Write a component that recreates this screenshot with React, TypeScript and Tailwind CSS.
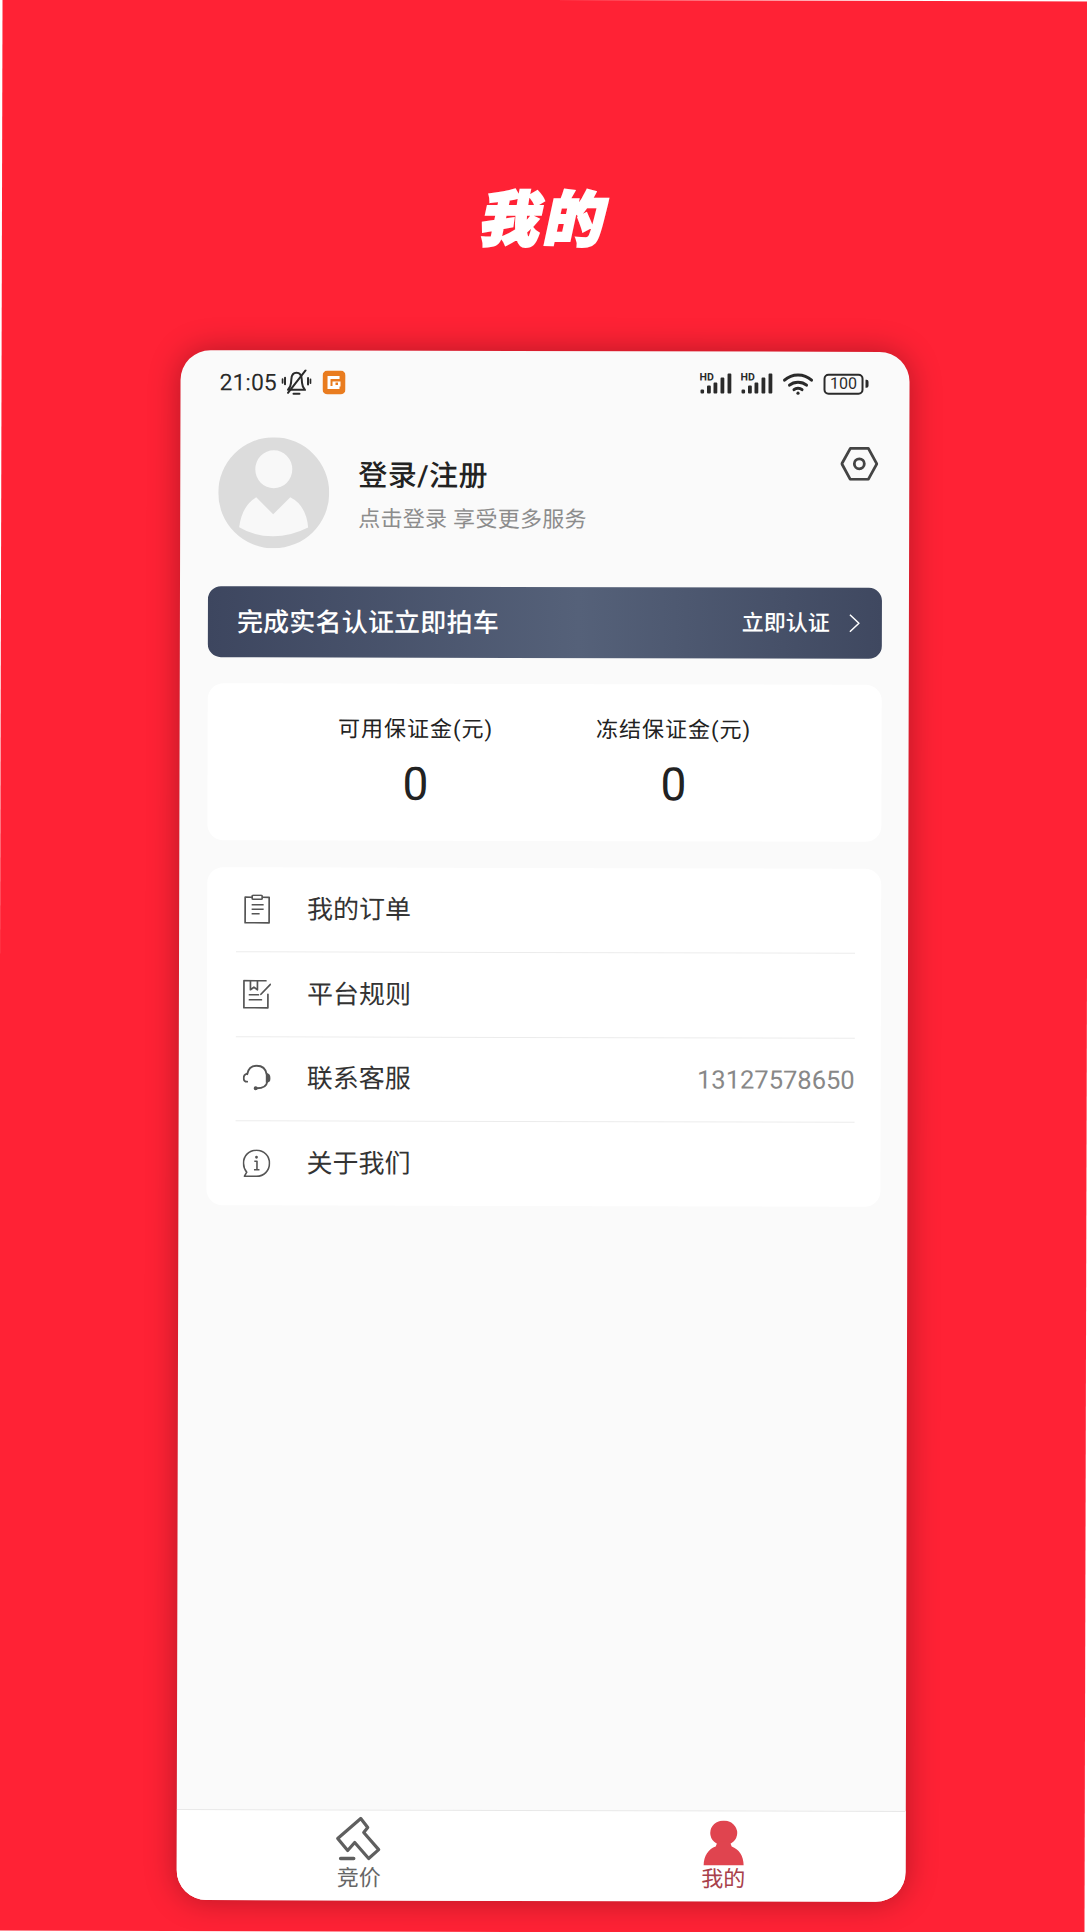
const SignalIcon = () => (
  <svg width="34" height="24" viewBox="0 0 34 24" fill="#2a2a2a">
    <text x="0" y="9" fontSize="10.5" fontWeight="700" fontFamily="Roboto, sans-serif">HD</text>
    <rect x="1" y="18" width="3.6" height="4" rx="1.2" />
    <rect x="7.5" y="14" width="3.8" height="8" rx="1" />
    <rect x="14" y="11" width="3.8" height="11" rx="1" />
    <rect x="21" y="6" width="3.8" height="16" rx="1" />
    <rect x="28" y="2" width="3.8" height="20" rx="1" />
  </svg>
);

const WifiIcon = () => (
  <svg width="31" height="24" viewBox="0 0 31 24" fill="none" stroke="#2a2a2a" strokeWidth="3" strokeLinecap="round">
    <path d="M2 8.5C9.5 1.5 21.5 1.5 29 8.5" />
    <path d="M7 13.5C11.5 9.5 19.5 9.5 24 13.5" />
    <path d="M11.5 18C13.5 16.2 17.5 16.2 19.5 18" />
    <circle cx="15.5" cy="21.5" r="1.6" fill="#2a2a2a" stroke="none" />
  </svg>
);

const BellMuteIcon = () => (
  <svg width="30" height="27" viewBox="0 0 30 27" fill="none" stroke="#2a2a2a" strokeWidth="2" strokeLinecap="round" strokeLinejoin="round">
    <path d="M6.5 20.5h17c-2-2-2.800-4-3-7l-.3-3.500C20 6 18 3.500 15 3.500S10 6 9.800 10l-.3 3.500c-.2 3-1 5-3 7Z" />
    <path d="M12 24.500h6" />
    <path d="M6.500 23.500 24 1" />
    <path d="M3.500 8.500v6.500M.9 10v3.500M26.500 8.500v6.500M29.100 10v3.500" />
  </svg>
);

const OrangeBadge = () => (
  <svg width="23" height="24" viewBox="0 0 23 24">
    <rect width="23" height="24" rx="5" fill="#e97c1f" />
    <path d="M17 7H6.500v10H17" fill="none" stroke="#fff" strokeWidth="3" />
    <path d="M10 11h8v5h-8Z" fill="#fff" />
    <rect x="13" y="12" width="2.500" height="2.500" fill="#e97c1f" />
  </svg>
);

const OrderIcon = () => (
  <svg width="28" height="30" viewBox="0 0 28 30" fill="none" stroke="#555" strokeWidth="1.700" strokeLinejoin="round">
    <path d="M9 3H2v25.500h24V3h-7" />
    <rect x="9" y="1" width="10" height="4" rx="1" />
    <path d="M8.500 10.500h12M8.500 15h12M8.500 19.500h8" />
  </svg>
);

const RuleIcon = () => (
  <svg width="28" height="30" viewBox="0 0 28 30" fill="none" stroke="#555" strokeWidth="1.700" strokeLinecap="round" strokeLinejoin="round">
    <path d="M23 1.500H1v27h24V15" />
    <path d="M7.500 1.500v9l3.500-2.500 3.500 2.500v-9" />
    <path d="M6.500 15.500h9M6.500 20.500h12" />
    <path d="M18 15 27.500 5" />
  </svg>
);

const ServiceIcon = () => (
  <svg width="28" height="28" viewBox="0 0 28 28" fill="none" stroke="#555" strokeWidth="1.800" strokeLinecap="round">
    <path d="M4.500 10C5.500 4.500 9 1.500 14 1.500S23 4.500 24 10" />
    <path d="M4.500 9.500C2 10 1 12 1 14s1.500 3.500 3.500 3.500" />
    <path d="M24 9.500c2 .5 3 2.500 3 4.500s-1 3.500-3 3.500Z" fill="#555" />
    <path d="M24.500 17.500C24 21.500 20 24 14 24" />
    <circle cx="13" cy="24" r="2" fill="#555" stroke="none" />
  </svg>
);

const InfoIcon = () => (
  <svg width="28" height="28" viewBox="0 0 28 28" fill="none" stroke="#555" strokeWidth="1.600" strokeLinejoin="round">
    <path d="M14 1C6.500 1 1 6.500 1 14c0 3.500 1.300 6.500 3.300 9L2 27h12c7.500 0 13-5.500 13-13S21.500 1 14 1Z" />
    <circle cx="14" cy="8" r="1.400" fill="#555" stroke="none" />
    <path d="M11.800 12h2.700v8M11.500 20.500h5.500" />
  </svg>
);

const HammerIcon = () => (
  <svg width="46" height="46" viewBox="0 0 46 46" fill="none" stroke="#5f5f5f" strokeWidth="3.200" strokeLinecap="round" strokeLinejoin="round">
    <path d="M25 2 32 11 28 16 43 33 33 42 19 26 12 34 2 22Z" />
    <path d="M5 42h13" strokeWidth="3.600" />
  </svg>
);

const PersonIcon = () => (
  <svg width="42" height="45" viewBox="0 0 42 45" fill="#e0444f">
    <ellipse cx="21" cy="12.500" rx="13.500" ry="12.500" />
    <path d="M15 21h12l2 5c7 2.500 12 9 12 19H1c0-10 5-16.500 12-19Z" />
  </svg>
);

const menuItems = [
  { label: "我的订单", icon: <OrderIcon /> },
  { label: "平台规则", icon: <RuleIcon /> },
  { label: "联系客服", icon: <ServiceIcon />, value: "13127578650" },
  { label: "关于我们", icon: <InfoIcon /> },
];

const App = () => {
  return (
    <div className="w-[1087px] h-[1932px] bg-white overflow-hidden font-['Roboto','Noto_Sans_CJK_SC',sans-serif]">
      <div className="h-full flex flex-col bg-[#ff2235] rotate-[0.15deg]">
        {/* title */}
        <div className="h-[351px] pt-[91px] flex items-center justify-center">
          <h1 className="text-[60px] leading-none font-black tracking-[4px] text-white -skew-x-12 [-webkit-text-stroke:2.5px_white]">我的</h1>
        </div>

        {/* phone */}
        <div className="ml-[179px] w-[729px] h-[1550px] flex flex-col bg-[#fafafa] rounded-[30px] overflow-hidden shadow-[0_0_32px_rgba(0,0,0,0.3)]">
          <div className="h-[64px] pl-[39px] pr-[41px] flex items-center justify-between text-[#2a2a2a]">
            <div className="flex items-center">
              <span className="text-[23px] leading-none">21:05</span>
              <span className="ml-[5px]"><BellMuteIcon /></span>
              <span className="ml-[11px]"><OrangeBadge /></span>
            </div>
            <div className="flex items-center">
              <SignalIcon />
              <span className="ml-[7px]"><SignalIcon /></span>
              <span className="ml-[8px]"><WifiIcon /></span>
              <div className="ml-[10px] flex items-center gap-[2px]">
                <div className="w-[40px] h-[21px] rounded-[5px] border-2 border-[#2a2a2a] flex items-center justify-center text-[16px] leading-none">100</div>
                <span className="w-[3px] h-[8px] rounded-r-[2px] bg-[#2a2a2a]" />
              </div>
            </div>
          </div>

          {/* profile */}
          <div className="mt-[23px] pl-[38px] pr-[31px] flex items-start justify-between">
            <div className="flex items-center">
              <svg width="111" height="111" viewBox="0 0 111 111">
                <circle cx="55.500" cy="55.500" r="55.500" fill="#dcdcdc" />
                <ellipse cx="55.500" cy="32" rx="18.500" ry="19" fill="#f8f8f8" />
                <path d="M38 60 55 77 72 60Q88 68 90 90 72 99 55 99 36 99 21 90 24 68 38 60Z" fill="#f8f8f8" />
              </svg>
              <div className="ml-[29px] pt-[5px]">
                <div className="text-[29px] leading-[36px] font-medium text-[#222] tracking-[0.5px]">登录/注册</div>
                <div className="mt-[11px] text-[22px] leading-[30px] text-[#8c8c8c] tracking-[0.3px]">点击登录 享受更多服务</div>
              </div>
            </div>
            <svg className="mt-[8px]" width="38" height="34" viewBox="0 0 38 34" fill="none" stroke="#444" strokeWidth="2.800" strokeLinejoin="round">
              <path d="M10 1.500h18L36.500 17 28 32.500H10L1.500 17Z" />
              <circle cx="19" cy="17" r="5" />
            </svg>
          </div>

          {/* real-name banner */}
          <div className="mt-[38px] ml-[28px] mr-[27px] h-[71px] pl-[29px] pr-[22px] flex items-center justify-between rounded-[13px] bg-gradient-to-r from-[#3d465f] via-[#556179] via-55% to-[#3f4860] text-white">
            <span className="text-[26px] leading-none font-medium tracking-[0.2px]">完成实名认证立即拍车</span>
            <div className="flex items-center">
              <span className="text-[22px] leading-none font-medium">立即认证</span>
              <svg className="ml-[19px]" width="11" height="19" viewBox="0 0 11 19" fill="none" stroke="#fff" strokeWidth="1.500">
                <path d="M1 1l9 8.500-9 8.500" />
              </svg>
            </div>
          </div>

          {/* deposit */}
          <div className="mt-[26px] ml-[28px] mr-[27px] h-[157px] pt-[30px] flex justify-center rounded-[16px] bg-white">
            {["可用保证金(元)", "冻结保证金(元)"].map((label) => (
              <div key={label} className="w-[258px] flex flex-col items-center text-[#222]">
                <span className="text-[22px] leading-[32px] tracking-[1px]">{label}</span>
                <span className="mt-[13px] text-[46px] leading-[50px]">0</span>
              </div>
            ))}
          </div>

          {/* menu */}
          <div className="mt-[27px] ml-[28px] mr-[27px] h-[338px] pl-[29px] pr-[26px] flex flex-col rounded-[16px] bg-white">
            {menuItems.map((item, i) => (
              <div key={item.label} className={`flex-1 pl-[7px] flex items-center ${i < 3 ? "border-b border-[#ececec]" : ""}`}>
                <span className="w-[28px] flex justify-center">{item.icon}</span>
                <span className="ml-[36px] text-[26px] leading-none text-[#333]">{item.label}</span>
                {item.value && <span className="ml-auto text-[25.500px] leading-none text-[#888]">{item.value}</span>}
              </div>
            ))}
          </div>

          <div className="flex-1" />

          {/* tab bar */}
          <div className="h-[91px] grid grid-cols-2 bg-white border-t border-[#e8e8e8]">
            <div className="pt-[6px] flex flex-col items-center">
              <HammerIcon />
              <span className="mt-[2px] text-[22px] leading-[28px] text-[#666]">竞价</span>
            </div>
            <div className="pt-[9px] flex flex-col items-center">
              <PersonIcon />
              <span className="text-[22px] leading-[28px] text-[#a8404a]">我的</span>
            </div>
          </div>
        </div>
      </div>
    </div>
  );
};

export default App;
